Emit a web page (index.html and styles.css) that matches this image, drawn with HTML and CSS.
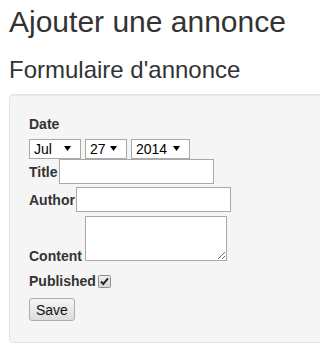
FILE: index.html
```
<!DOCTYPE html>
<html lang="fr">
<head>
<meta charset="utf-8">
<title>Ajouter une annonce</title>
<link rel="stylesheet" href="styles.css">
</head>
<body>
<div class="page">
  <h1 class="title">Ajouter une annonce</h1>
  <h2 class="subtitle">Formulaire d'annonce</h2>
  <div class="well">
    <form class="form">
      <div class="field-date">
        <label class="lbl lbl-block">Date</label>
        <div class="selects">
          <span class="select sel-month"><span class="sel-text">Jul</span><svg class="arrow" width="7" height="5" viewBox="0 0 7 5"><polygon points="0,0 7,0 3.5,5"/></svg></span>
          <span class="select sel-day"><span class="sel-text">27</span><svg class="arrow" width="7" height="5" viewBox="0 0 7 5"><polygon points="0,0 7,0 3.5,5"/></svg></span>
          <span class="select sel-year"><span class="sel-text">2014</span><svg class="arrow" width="7" height="5" viewBox="0 0 7 5"><polygon points="0,0 7,0 3.5,5"/></svg></span>
        </div>
      </div>
      <div class="row row-base"><label class="lbl">Title</label><input class="text" type="text"></div>
      <div class="row row-base"><label class="lbl">Author</label><input class="text" type="text"></div>
      <div class="row row-end"><label class="lbl">Content</label><textarea class="area"></textarea></div>
      <div class="row row-start"><label class="lbl">Published</label><span class="check"><svg width="13" height="13" viewBox="0 0 13 13"><defs><linearGradient id="cg" x1="0" y1="0" x2="0" y2="1"><stop offset="0" stop-color="#f2f2f2"/><stop offset="1" stop-color="#d4d4d4"/></linearGradient></defs><rect x="0.5" y="0.5" width="12" height="12" rx="1" fill="url(#cg)" stroke="#8e8e8e"/><path d="M3 6.5 L5.3 9 L10 3.3" fill="none" stroke="#2a2a2a" stroke-width="2"/></svg></span></div>
      <div class="actions"><button class="btn" type="button">Save</button></div>
    </form>
  </div>
</div>
</body>
</html>
```
FILE: styles.css
```
html, body {
  margin: 0;
  padding: 0;
  overflow: hidden;
  background: #fff;
}
body {
  font-family: "Liberation Sans", Arial, sans-serif;
  font-size: 14px;
  line-height: 20px;
  color: #333;
}
.page {
  padding-left: 9px;
  overflow: hidden;
}
.title {
  margin: 5px 0 0;
  font-size: 30px;
  line-height: 33px;
  font-weight: 500;
  color: #333;
}
.subtitle {
  margin: 19px 0 0;
  font-size: 24px;
  line-height: 26px;
  font-weight: 500;
  color: #333;
}
.well {
  margin-top: 11px;
  margin-right: -40px;
  padding: 19px 19px 21px;
  background: #f5f5f5;
  border: 1px solid #e3e3e3;
  border-radius: 4px;
  box-shadow: inset 0 1px 1px rgba(0, 0, 0, 0.05);
}
.form {
  margin: 0;
}
.lbl {
  font-weight: bold;
  margin-bottom: 5px;
  line-height: 20px;
}
.lbl-block {
  display: block;
}
.selects {
  display: flex;
  gap: 4px;
  height: 20px;
}
.select {
  box-sizing: border-box;
  display: inline-flex;
  align-items: center;
  justify-content: space-between;
  height: 20px;
  padding: 0 9px 0 4px;
  background: #fff;
  border: 1px solid #a9a9a9;
  color: #000;
  line-height: 18px;
}
.sel-month { width: 52px; }
.sel-day { width: 42px; }
.sel-year { width: 59px; }
.arrow {
  display: block;
  fill: #000;
  margin-bottom: 1px;
}
.row {
  display: flex;
}
.row-base {
  align-items: baseline;
}
.row-end {
  align-items: flex-end;
}
.row-start {
  align-items: flex-start;
}
.text {
  box-sizing: border-box;
  width: 155px;
  height: 25px;
  margin: 0 0 0 1px;
  padding: 2px 2px 1px;
  border: 1px solid #a9a9a9;
  background: #fff;
  font-family: inherit;
  font-size: 14px;
  line-height: 20px;
  color: #000;
  outline: none;
}
.area {
  box-sizing: border-box;
  width: 142px;
  height: 45px;
  margin: 1px 0 10px 3px;
  padding: 2px;
  border: 1px solid #a9a9a9;
  background: #fff;
  font-family: inherit;
  font-size: 14px;
  line-height: 20px;
}
.check {
  display: block;
  width: 13px;
  height: 13px;
  margin: 4px 0 0 2px;
}
.check svg {
  display: block;
}
.actions {
  display: flex;
}
.btn {
  box-sizing: border-box;
  height: 23px;
  margin-top: 2px;
  padding: 1px 6px 0;
  border: 1px solid #acacac;
  border-radius: 3px;
  background: linear-gradient(#f5f5f5, #dddddd);
  font-family: inherit;
  font-size: 14px;
  line-height: 20px;
  color: #111;
}
```
